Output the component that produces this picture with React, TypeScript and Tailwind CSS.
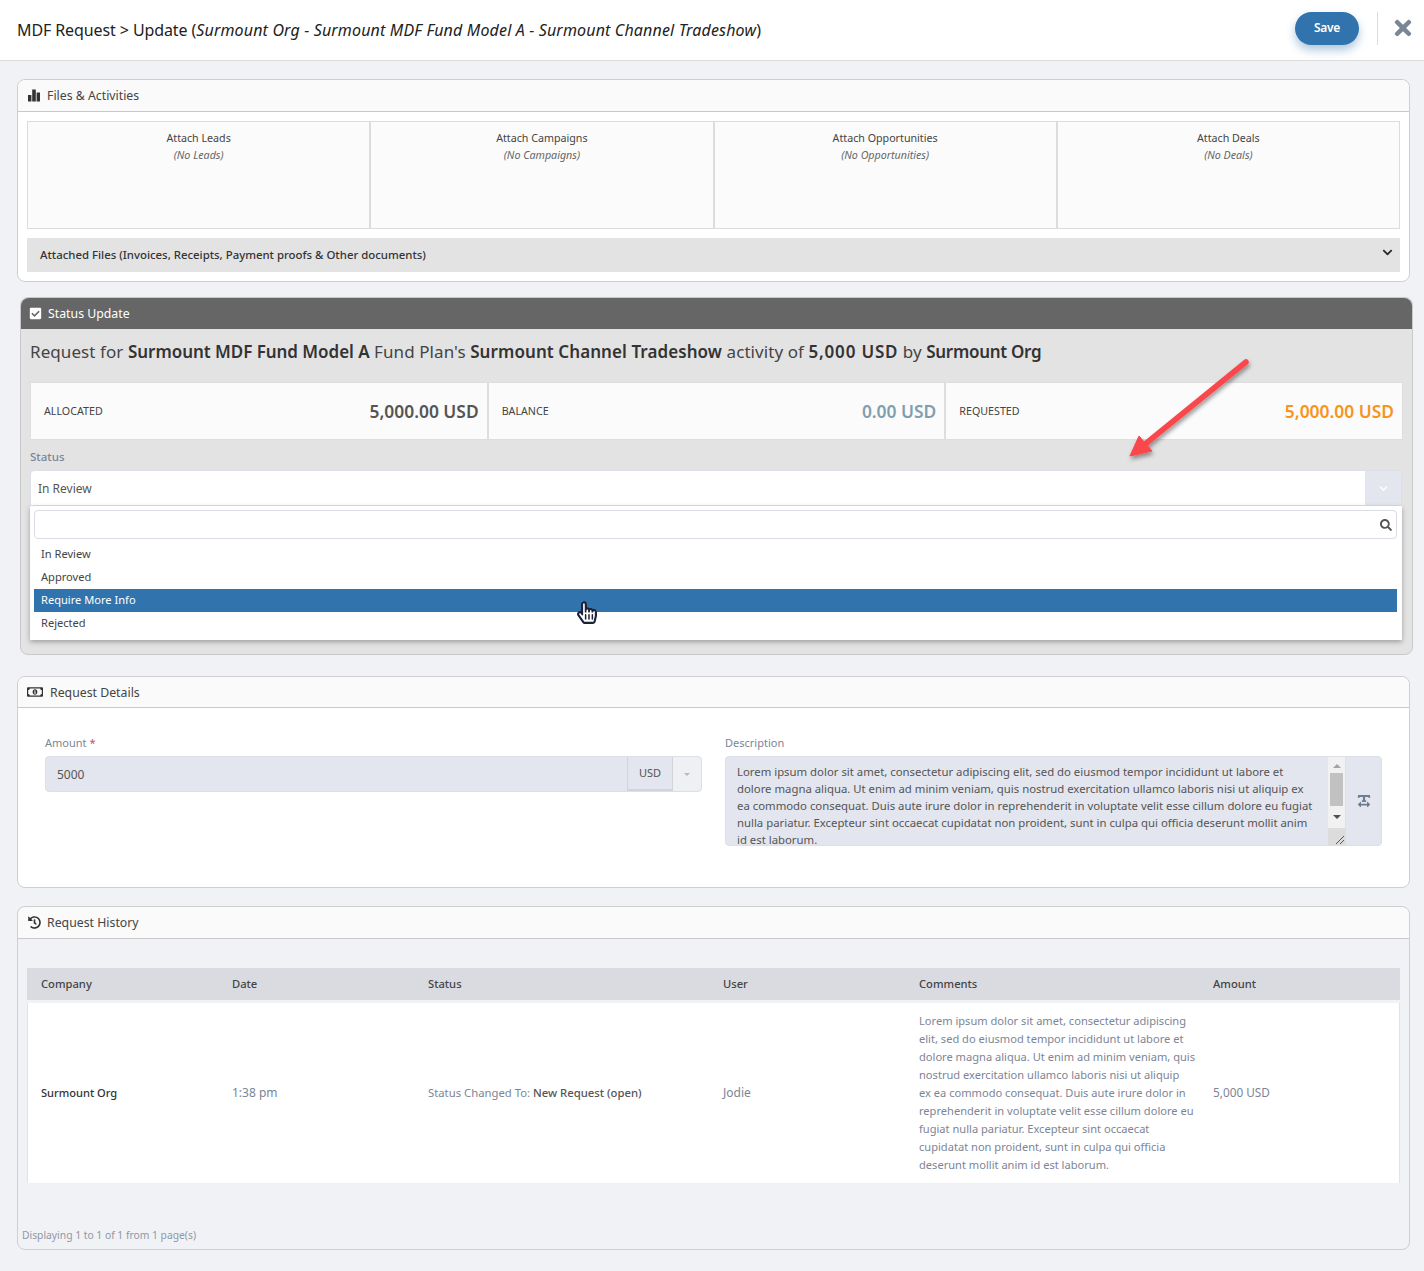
import * as React from "react";
import {
  FaCheckSquare,
  FaChevronDown,
  FaHandPointer,
  FaHistory,
  FaRegHandPointer,
  FaRegMoneyBillAlt,
  FaSearch,
  FaTextWidth,
  FaTimes,
} from "react-icons/fa";

const attachBoxes = [
  ["Attach Leads", "(No Leads)"],
  ["Attach Campaigns", "(No Campaigns)"],
  ["Attach Opportunities", "(No Opportunities)"],
  ["Attach Deals", "(No Deals)"],
];

const historyColumns = ["Company", "Date", "Status", "User", "Comments", "Amount"];

const commentLines = [
  "Lorem ipsum dolor sit amet, consectetur adipiscing",
  "elit, sed do eiusmod tempor incididunt ut labore et",
  "dolore magna aliqua. Ut enim ad minim veniam, quis",
  "nostrud exercitation ullamco laboris nisi ut aliquip",
  "ex ea commodo consequat. Duis aute irure dolor in",
  "reprehenderit in voluptate velit esse cillum dolore eu",
  "fugiat nulla pariatur. Excepteur sint occaecat",
  "cupidatat non proident, sunt in culpa qui officia",
  "deserunt mollit anim id est laborum.",
];

const descriptionLines = [
  "Lorem ipsum dolor sit amet, consectetur adipiscing elit, sed do eiusmod tempor incididunt ut labore et",
  "dolore magna aliqua. Ut enim ad minim veniam, quis nostrud exercitation ullamco laboris nisi ut aliquip ex",
  "ea commodo consequat. Duis aute irure dolor in reprehenderit in voluptate velit esse cillum dolore eu fugiat",
  "nulla pariatur. Excepteur sint occaecat cupidatat non proident, sunt in culpa qui officia deserunt mollit anim",
  "id est laborum.",
];

function BarsIcon() {
  return (
    <svg width="13" height="13" viewBox="0 0 13 13" className="text-[#333]" fill="currentColor">
      <rect x="0" y="6" width="3.4" height="6.5" />
      <rect x="4.2" y="0.5" width="3.6" height="12" />
      <rect x="8.6" y="3.5" width="3.4" height="9" />
    </svg>
  );
}

function PanelHeader({ icon, title, height = "h-8" }: { icon: React.ReactNode; title: string; height?: string }) {
  return (
    <div className={`flex items-center gap-[6px] rounded-t-lg border-b border-[#c9c9c9] bg-[#fafafa] pl-[10px] text-[12.3px] text-[#444] ${height}`}>
      {icon}
      <span className="mt-[2px]">{title}</span>
    </div>
  );
}

function Stat({ label, value, color }: { label: string; value: string; color: string }) {
  return (
    <div className="flex h-[58px] items-center justify-between border border-[#dedede] bg-[#fbfbfb] pl-[13px] pr-[8px]">
      <span className="text-[10.7px] text-[#444]">{label}</span>
      <span className={`text-[17.4px] font-semibold ${color}`}>{value}</span>
    </div>
  );
}

function RedArrow() {
  return (
    <svg
      width="140"
      height="116"
      viewBox="0 0 140 116"
      className="pointer-events-none absolute left-[1120px] top-[350px]"
    >
      <defs>
        <filter id="arrowShadow" x="-20%" y="-20%" width="150%" height="150%">
          <feDropShadow dx="1" dy="3" stdDeviation="2" floodColor="#000" floodOpacity="0.4" />
        </filter>
      </defs>
      <g filter="url(#arrowShadow)">
        <line x1="126" y1="12" x2="24" y2="95" stroke="#f9464b" strokeWidth="5.5" strokeLinecap="round" />
        <path d="M10 106 L19 86 L32 101 Z" fill="#f9464b" stroke="#f9464b" strokeWidth="1" strokeLinejoin="round" />
      </g>
    </svg>
  );
}

function HandCursor() {
  return (
    <div className="pointer-events-none absolute left-[577px] top-[600px] h-[25px] w-[20px]">
      <FaHandPointer className="absolute inset-0 text-white" size={20} style={{ height: 25 }} />
      <FaRegHandPointer className="absolute inset-0 text-[#1c2338]" size={20} style={{ height: 25 }} />
    </div>
  );
}

export default function App() {
  return (
    <div
      className="relative min-h-[1271px] bg-[#f0f2f6] text-[12px] text-[#555]"
      style={{ fontFamily: "'Noto Sans', Roboto, sans-serif" }}
    >
      <header className="flex h-[61px] items-center justify-between border-b border-[#dcdcdc] bg-white pl-[17px] pr-[9px]">
        <h1 className="text-[16px] tracking-[-0.1px] text-[#222]">
          MDF Request &gt; Update (<i className="tracking-[0.16px]">Surmount Org - Surmount MDF Fund Model A - Surmount Channel Tradeshow</i>)
        </h1>
        <div className="mb-[4px] flex items-center">
          <button className="h-[33px] w-[64px] rounded-full bg-[#3174ad] text-[12px] font-semibold tracking-[-0.3px] text-white shadow-[0_5px_10px_rgba(49,116,173,0.4)]">
            Save
          </button>
          <div className="ml-[18px] mr-[13px] h-[33px] w-px bg-[#dcdcdc]" />
          <FaTimes size={24} className="text-[#7a8595]" />
        </div>
      </header>

      <main className="flex flex-col pl-[17px] pr-[14px] pt-[18px]">
        <section className="h-[203px] rounded-lg border border-[#cfcfcf] bg-white">
          <PanelHeader icon={<BarsIcon />} title="Files & Activities" />
          <div className="px-[9px] pt-[9px]">
            <div className="grid h-[108px] grid-cols-4">
              {attachBoxes.map(([title, empty]) => (
                <div key={title} className="border border-[#dcdcdc] bg-[#fbfbfb] pt-[8px] text-center text-[10.7px] leading-[17px] text-[#444]">
                  <div>{title}</div>
                  <div className="italic text-[#666]">{empty}</div>
                </div>
              ))}
            </div>
            <div className="mt-[9px] flex h-[34px] items-center justify-between bg-[#e3e3e3] pl-[13px] pr-[7px]">
              <span className="text-[11.4px] font-medium text-[#333]">
                Attached Files (Invoices, Receipts, Payment proofs &amp; Other documents)
              </span>
              <FaChevronDown size={11} className="mb-[5px] text-[#2b2b2b]" />
            </div>
          </div>
        </section>

        <section className="ml-[3px] mr-[-3px] mt-[15px] h-[358px] rounded-lg border border-[#c9c9c9] bg-[#e3e3e3]">
          <div className="flex h-[31px] items-center gap-[6px] rounded-t-lg bg-[#666] pl-[8px] text-[12.3px] text-white">
            <FaCheckSquare size={13} />
            <span className="mt-[2px]">Status Update</span>
          </div>
          <div className="px-[9px] pt-[11px]">
            <p className="text-[17px] leading-6 tracking-[0.08px] text-[#444]">
              Request for <b className="font-semibold tracking-[-0.04px] text-[#333]">Surmount MDF Fund Model A</b> Fund Plan's{" "}
              <b className="font-semibold text-[#333]">Surmount Channel Tradeshow</b> activity of{" "}
              <b className="font-semibold tracking-[0.8px] text-[#333]">5,000 USD</b> by{" "}
              <b className="font-semibold tracking-[-0.3px] text-[#333]">Surmount Org</b>
            </p>
            <div className="mt-[18px] grid grid-cols-3">
              <Stat label="ALLOCATED" value="5,000.00 USD" color="text-[#555]" />
              <Stat label="BALANCE" value="0.00 USD" color="text-[#7f9fb0]" />
              <Stat label="REQUESTED" value="5,000.00 USD" color="text-[#f7941d]" />
            </div>
            <div className="mt-[10px] text-[11.5px] font-medium leading-[14px] text-[#7c8596]">Status</div>
            <div className="relative mr-px mt-[6px]">
              <div className="flex h-[36px] items-center justify-between rounded-t border border-[#dcdfe6] bg-white pl-[7px] text-[12px] text-[#555]">
                <span className="mt-[1px]">In Review</span>
                <div className="flex h-full w-[36px] items-center justify-center bg-[#e3e6ee]">
                  <FaChevronDown size={9} className="text-white" />
                </div>
              </div>
              <div className="absolute inset-x-0 top-full h-[134px] bg-white pl-[4px] pr-[5px] pt-[4px] shadow-[0_2px_5px_rgba(0,0,0,0.3)]">
                <div className="flex h-[29px] items-center justify-end rounded border border-[#d9dce4] pr-[4px]">
                  <FaSearch size={12} className="text-[#555]" />
                </div>
                <ul className="mt-[4px] text-[11.1px] text-[#444]">
                  <li className="flex h-[23px] items-center px-[7px]">In Review</li>
                  <li className="flex h-[23px] items-center px-[7px]">Approved</li>
                  <li className="flex h-[23px] items-center bg-[#3174ad] px-[7px] text-white">Require More Info</li>
                  <li className="flex h-[23px] items-center px-[7px]">Rejected</li>
                </ul>
              </div>
            </div>
          </div>
        </section>

        <section className="mt-[21px] h-[212px] rounded-lg border border-[#cfcfcf] bg-white">
          <PanelHeader
            height="h-[31px]"
            icon={<FaRegMoneyBillAlt size={16} className="ml-[-1px] mr-px text-[#333]" />}
            title="Request Details"
          />
          <div className="grid grid-cols-[657px_657px] gap-x-[23px] pl-[27px] pt-[27px]">
            <div>
              <div className="text-[11px] leading-[16px] text-[#7c8596]">
                Amount <span className="text-[#c2506a]">*</span>
              </div>
              <div className="mt-[5px] flex h-[36px] rounded border border-[#dcdfe6] bg-[#e3e6ee]">
                <span className="flex flex-1 items-center pl-[11px] pt-[2px] text-[12px] text-[#555]">5000</span>
                <span className="flex w-[46px] items-center justify-center border-x border-b-2 border-[#d2d4da] text-[11px] text-[#555]">USD</span>
                <span className="flex w-[28px] items-center justify-center rounded-r bg-[#eef0f4]">
                  <span className="h-0 w-0 border-x-[3px] border-t-[3px] border-x-transparent border-t-[#b5b9c2]" />
                </span>
              </div>
            </div>
            <div>
              <div className="text-[11px] leading-[16px] text-[#7c8596]">Description</div>
              <div className="mt-[5px] flex h-[90px] overflow-hidden rounded border border-[#dcdfe6] bg-[#e3e6ee]">
                <div className="w-[603px] overflow-hidden pl-[11px] pt-[6px] text-[11.35px] leading-[17px] text-[#555]">
                  {descriptionLines.map((line) => (
                    <div key={line} className="whitespace-nowrap">{line}</div>
                  ))}
                </div>
                <div className="flex w-[17px] flex-col items-center bg-[#f1f1f1]">
                  <span className="mt-[7px] h-0 w-0 border-x-[4px] border-b-[4px] border-x-transparent border-b-[#a3a3a3]" />
                  <span className="mt-[5px] h-[33px] w-[13px] bg-[#c1c1c1]" />
                  <span className="mt-[9px] h-0 w-0 border-x-[4px] border-t-[4px] border-x-transparent border-t-[#505050]" />
                  <span className="mt-auto flex h-[17px] w-full items-end justify-end bg-[#dcdcdc] p-px">
                    <svg width="9" height="9" viewBox="0 0 9 9" stroke="#555" strokeWidth="1">
                      <line x1="1" y1="9" x2="9" y2="1" />
                      <line x1="5" y1="9" x2="9" y2="5" />
                    </svg>
                  </span>
                </div>
                <div className="flex w-[36px] items-center justify-center border-l border-[#dcdfe6]">
                  <FaTextWidth size={14} className="text-[#6f7d92]" />
                </div>
              </div>
            </div>
          </div>
        </section>

        <section className="mt-[18px] h-[344px] rounded-lg border border-[#cfcfcf]">
          <PanelHeader icon={<FaHistory size={13} className="text-[#333]" />} title="Request History" />
          <div className="px-[9px] pt-[29px]">
            <div className="grid h-[32px] grid-cols-[191px_196px_295px_196px_294px_1fr] items-center bg-[#d9dbe0] pl-[14px] text-[11.2px] font-medium text-[#444]">
              {historyColumns.map((c) => (
                <span key={c}>{c}</span>
              ))}
            </div>
            <div className="mt-[3px] grid h-[180px] grid-cols-[191px_196px_295px_196px_294px_1fr] items-center border-x border-[#e3e3e3] bg-white pl-[13px] text-[12px] text-[#7c8596]">
              <span className="text-[11.1px] font-medium text-[#333]">Surmount Org</span>
              <span>1:38 pm</span>
              <span className="text-[11.3px]">
                Status Changed To: <span className="font-medium text-[#555]">New Request (open)</span>
              </span>
              <span>Jodie</span>
              <div className="text-[11.1px] leading-[18px]">
                {commentLines.map((line) => (
                  <div key={line} className="whitespace-nowrap">{line}</div>
                ))}
              </div>
              <span className="text-[11.8px]">5,000 USD</span>
            </div>
          </div>
          <div className="pl-[4px] pt-[44px] text-[10.3px] leading-[16px] text-[#8f97a6]">Displaying 1 to 1 of 1 from 1 page(s)</div>
        </section>
      </main>

      <RedArrow />
      <HandCursor />
    </div>
  );
}
